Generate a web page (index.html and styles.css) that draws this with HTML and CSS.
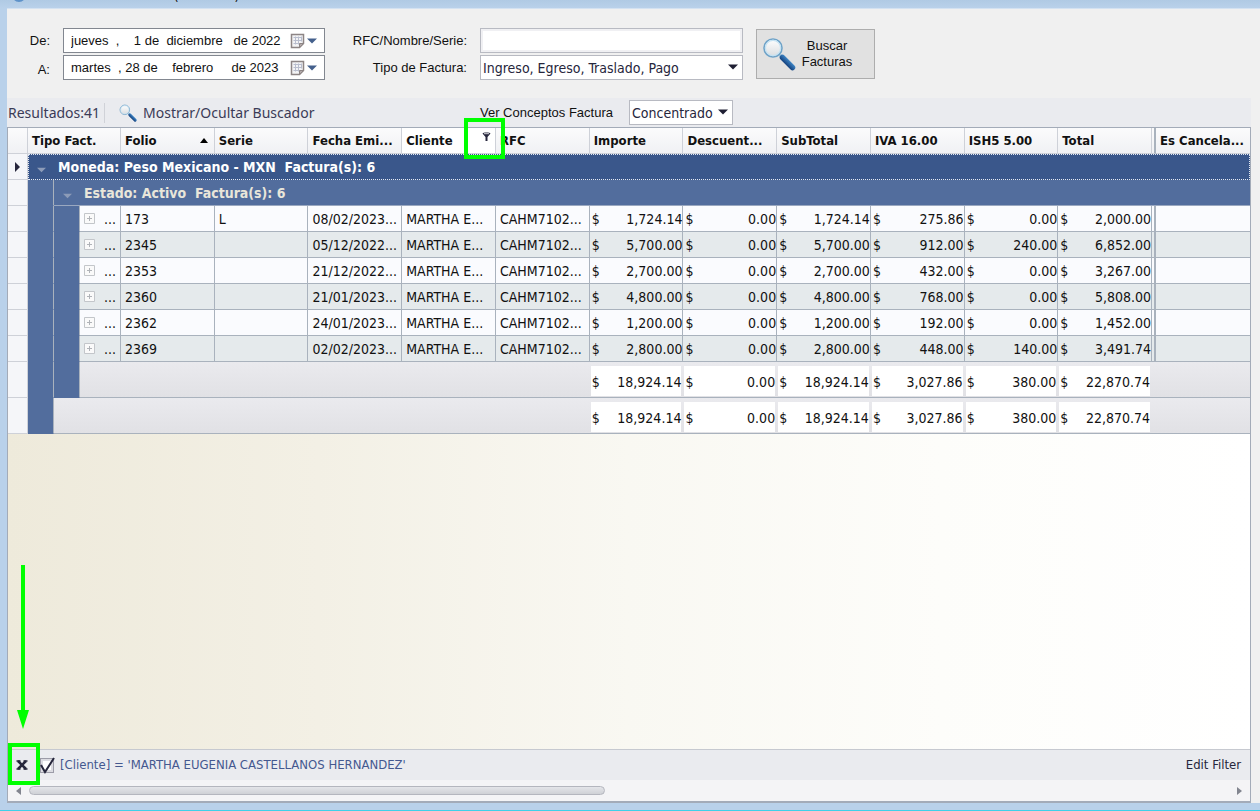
FILE: index.html
```
<!DOCTYPE html>
<html lang="es">
<head>
	<meta charset="UTF-8">
	<meta name="viewport" content="width=device-width, initial-scale=1.0">
	<link rel="stylesheet" href="styles.css">
</head>
<body>

	<!-- iconos compartidos -->
	<svg class="defs" aria-hidden="true">
		<defs>
			<linearGradient id="handle" x1="0" y1="1" x2="1" y2="0">
				<stop offset="0.3" stop-color="#123f7c"/>
				<stop offset="0.7" stop-color="#3f86c6"/>
			</linearGradient>
			<linearGradient id="lens" x1="0" y1="0" x2="0" y2="1">
				<stop offset="0" stop-color="#ffffff"/>
				<stop offset="1" stop-color="#d9dcdf"/>
			</linearGradient>
		</defs>
		<symbol id="lupa" viewBox="0 0 34 34">
			<path d="M18 18l4 4" stroke="#8fb9d6" stroke-width="3"/>
			<path d="M20.500 20.500L30.500 30.500" stroke="url(#handle)" stroke-width="5.500" stroke-linecap="round"/>
			<circle cx="11" cy="11" r="9" fill="url(#lens)" stroke="#6fa3c8" stroke-width="1.600"/>
			<circle cx="11" cy="11" r="7.600" fill="none" stroke="#c4e2f3" stroke-width="1.200"/>
		</symbol>
		<symbol id="calendario" viewBox="0 0 15 16">
			<path d="M1.500 1.500h12v9l-4 4h-8z" fill="#f3f3f5" stroke="#8d8585" stroke-width="1.500"/>
			<path d="M3.500 4.500h8M3.500 7.500h8M3.500 10.500h6M5.500 3.500v8M8.500 3.500v8M11.500 3.500v5" stroke="#b9bece" fill="none"/>
			<path d="M9.500 14.500v-4h4z" fill="#b3aaaa" stroke="#8d8585"/>
		</symbol>
		<symbol id="abajo" viewBox="0 0 10 6"><path d="M0 0.500h10L5 5.500z"/></symbol>
		<symbol id="mas" viewBox="0 0 11 11">
			<path d="M0.500 0.500h10v10h-10z" fill="#fafafa" stroke="#c3c6ca"/>
			<path d="M3 5.500h5M5.500 3v5" stroke="#b0b3b8"/>
		</symbol>
	</svg>

	<header class="titlebar">
		<span class="app-icon"></span>
		<span class="paren">(</span>
		<span class="paren">)</span>
	</header>

	<main class="window">

		<!-- filtros de busqueda -->
		<form class="search">
			<div class="fields">
				<label for="desde">De:</label>
				<div class="date">
					<input type="text" id="desde" value="jueves  ,    1 de  diciembre   de 2022">
					<button type="button" aria-label="Abrir calendario">
						<svg width="15" height="16"><use href="#calendario"/></svg>
						<svg class="arrow" width="10" height="6"><use href="#abajo"/></svg>
					</button>
				</div>
				<label for="hasta" class="low">A:</label>
				<div class="date">
					<input type="text" id="hasta" value="martes  , 28 de    febrero     de 2023">
					<button type="button" aria-label="Abrir calendario">
						<svg width="15" height="16"><use href="#calendario"/></svg>
						<svg class="arrow" width="10" height="6"><use href="#abajo"/></svg>
					</button>
				</div>
			</div>
			<div class="fields wide">
				<label for="rfc">RFC/Nombre/Serie:</label>
				<input type="text" id="rfc" class="box">
				<label for="tipo">Tipo de Factura:</label>
				<div class="combo">
					<select id="tipo"><option>Ingreso, Egreso, Traslado, Pago</option></select>
					<svg width="10" height="6"><use href="#abajo"/></svg>
				</div>
			</div>
			<button type="button" class="buscar">
				<svg width="34" height="34"><use href="#lupa"/></svg>
				<span>Buscar Facturas</span>
			</button>
		</form>

		<section class="content">
			<div class="toolbar">
				<div class="tools">
					<span class="count">Resultados:41</span>
					<button type="button" class="toggle">
						<svg width="18" height="18"><use href="#lupa"/></svg>
						Mostrar/Ocultar Buscador
					</button>
				</div>
				<label for="conceptos">Ver Conceptos Factura</label>
				<div class="combo">
					<select id="conceptos"><option>Concentrado</option></select>
					<svg width="10" height="6"><use href="#abajo"/></svg>
				</div>
			</div>

			<div class="grid">
				<table>
					<colgroup>
						<col class="c-mark"><col class="c-indent"><col class="c-indent"><col class="c-tipo">
						<col span="11"><col class="c-split"><col>
					</colgroup>
					<thead>
						<tr>
							<th></th>
							<th colspan="3">Tipo Fact.</th>
							<th><div class="sorted">Folio <svg width="8" height="5" viewBox="0 0 8 5"><path d="M4 0l4 5H0z"/></svg></div></th>
							<th>Serie</th>
							<th>Fecha Emi...</th>
							<th class="filtered">Cliente
								<svg class="funnel" width="9" height="9" viewBox="0 0 9 9"><path d="M0.500 1.500C0.500 0 8.500 0 8.500 1.500L5.500 5v4h-2V5z"/><path d="M2 1.700h5" stroke="#fff" stroke-width="0.800"/></svg>
								<span class="mark"></span>
							</th>
							<th>RFC</th>
							<th>Importe</th>
							<th>Descuent...</th>
							<th>SubTotal</th>
							<th>IVA 16.00</th>
							<th>ISH5 5.00</th>
							<th>Total</th>
							<th class="split"></th>
							<th>Es Cancela...</th>
						</tr>
					</thead>
					<tbody>
						<tr class="group current">
							<th><svg width="5" height="10" viewBox="0 0 5 10"><path d="M0 0l5 5-5 5z"/></svg></th>
							<td colspan="16"><svg width="9" height="6"><use href="#abajo"/></svg>Moneda: Peso Mexicano - MXN&nbsp; Factura(s): 6</td>
						</tr>
						<tr class="group">
							<th></th>
							<td class="indent"></td>
							<td colspan="15"><svg width="9" height="6"><use href="#abajo"/></svg>Estado: Activo&nbsp; Factura(s): 6</td>
						</tr>
					</tbody>
					<tbody id="facturas"></tbody>
					<tbody id="totales"></tbody>
				</table>

				<div class="empty">
					<svg class="pointer" width="12" height="164" viewBox="0 0 12 164"><path d="M4 0h4v145h4l-6 19-6-19h4z" fill="#0f0"/></svg>
				</div>

				<div class="filterbar">
					<button type="button" class="close" aria-label="Quitar filtro">
						<svg width="12" height="10" viewBox="0 0 12 10"><path d="M2 1l8 8M10 1L2 9" stroke="#26263c" stroke-width="2.500"/><path d="M0.500 1h4M7.500 1h4M0.500 9h4M7.500 9h4" stroke="#26263c" stroke-width="1.500"/></svg>
						<span class="mark"></span>
					</button>
					<label class="check">
						<input type="checkbox" checked aria-label="Filtro activo">
						<svg width="15" height="17" viewBox="0 0 15 17"><path d="M1 8l4 7L14 1" fill="none" stroke="#26263c" stroke-width="2"/></svg>
					</label>
					<a href="#" class="expr">[Cliente] = 'MARTHA EUGENIA CASTELLANOS HERNANDEZ'</a>
					<button type="button" class="edit">Edit Filter</button>
				</div>

				<div class="scrollbar">
					<svg width="5" height="8" viewBox="0 0 5 8"><path d="M5 0v8L0 4z"/></svg>
					<div class="track"><div class="thumb"></div></div>
					<svg width="5" height="8" viewBox="0 0 5 8"><path d="M0 0v8l5-4z"/></svg>
				</div>
			</div>
		</section>
	</main>

	<script>
	const facturas = [
		['173', 'L', '08/02/2023...', '1,724.14', '0.00', '1,724.14', '275.86', '0.00', '2,000.00'],
		['2345', '', '05/12/2022...', '5,700.00', '0.00', '5,700.00', '912.00', '240.00', '6,852.00'],
		['2353', '', '21/12/2022...', '2,700.00', '0.00', '2,700.00', '432.00', '0.00', '3,267.00'],
		['2360', '', '21/01/2023...', '4,800.00', '0.00', '4,800.00', '768.00', '0.00', '5,808.00'],
		['2362', '', '24/01/2023...', '1,200.00', '0.00', '1,200.00', '192.00', '0.00', '1,452.00'],
		['2369', '', '02/02/2023...', '2,800.00', '0.00', '2,800.00', '448.00', '140.00', '3,491.74']
	];
	const totales = ['18,924.14', '0.00', '18,924.14', '3,027.86', '380.00', '22,870.74'];

	const celda = (v) => `<td>${v}</td>`;
	const importe = (v) => `<td class="money"><div><span>$</span><span>${v}</span></div></td>`;

	document.getElementById('facturas').innerHTML = facturas.map((f) => `
		<tr class="row">
			<th></th><td class="indent"></td><td class="indent"></td>
			<td><div class="expand"><svg width="11" height="11"><use href="#mas"/></svg>...</div></td>
			${f.slice(0, 3).map(celda).join('')}
			<td>MARTHA E...</td><td>CAHM7102...</td>
			${f.slice(3).map(importe).join('')}
			<td class="split"></td><td></td>
		</tr>`).join('');

	// un pie por cada nivel de agrupacion
	document.getElementById('totales').innerHTML = [2, 1].map((nivel) => `
		<tr class="total">
			<th></th>${'<td class="indent"></td>'.repeat(nivel)}
			<td colspan="${8 - nivel}"></td>
			${totales.map(importe).join('')}
			<td colspan="2"></td>
		</tr>`).join('');
	</script>

</body>
</html>
```

FILE: styles.css
```
* {box-sizing: border-box; }
body {margin: 0; min-height: 100vh; display: flex; flex-direction: column; background: #b9d1ea; border-bottom: 1px solid #3fd0e8; font: 13px/16px "DejaVu Sans Condensed", "DejaVu Sans", sans-serif; color: #111; }
button, input, select {font: inherit; color: inherit; margin: 0; padding: 0; border: 0; background: none; border-radius: 0; }
.defs {position: absolute; width: 0; height: 0; }

/* barra de titulo */
.titlebar {height: 8px; display: flex; align-items: flex-end; padding-left: 12px; overflow: hidden; background: linear-gradient(#b0cae4, #b9d1ea); }
.titlebar .app-icon {width: 14px; height: 14px; margin-bottom: 6px; border-radius: 50%; background: #2360a5; border: 2px solid #5e92c9; }
.titlebar .paren {margin-left: 148px; margin-bottom: 3px; }
.titlebar .paren + .paren {margin-left: 56px; }

.window {flex: 1; display: flex; flex-direction: column; margin: 0 0 7px 7px; background: #f0f0f0; border-top: 1px solid #d4e2f1; }

/* formulario */
.search {display: flex; align-items: flex-start; padding: 19px 0 18px 21px; font: 13px/16px "Liberation Sans", Arial, sans-serif; }
.fields {display: grid; grid-template-columns: 22px 262px; grid-auto-rows: 25px; gap: 2px 13px; align-items: center; text-align: right; }
.fields .low {padding-top: 4px; }
.fields.wide {margin: 0 13px 0 24px; grid-template-columns: 118px 263px; }
.date {display: flex; align-items: center; height: 25px; padding: 0 7px; background: #fff; border: 1px solid #828790; }
.date input {flex: 1; min-width: 0; outline: 0; }
.date button {display: flex; align-items: center; gap: 2px; }
.date .arrow {fill: #44608c; }
.box {height: 25px; background: #fff; border: 1px solid #b8bac2; box-shadow: inset 0 0 0 2px #f0f0f3; }
.combo {position: relative; height: 25px; }
.combo select {width: 100%; height: 100%; padding-left: 2px; background: #fff; border: 1px solid #b8bac2; appearance: none; font: 14px "DejaVu Sans Condensed", sans-serif; color: #26263c; }
.combo svg {position: absolute; right: 5px; top: 9px; fill: #1f1f33; pointer-events: none; }
.buscar {display: flex; align-items: center; gap: 4px; width: 119px; height: 50px; margin-top: 1px; padding: 0 20px 0 5px; background: #e1e1e1; border: 1px solid #adadad; text-align: center; }
.buscar svg {flex: none; }

.content {flex: 1; display: flex; flex-direction: column; margin-right: 9px; }

/* barra de herramientas */
.toolbar {display: flex; align-items: center; height: 29px; padding-left: 1px; background: #eaebef; font: 13px/16px "Liberation Sans", Arial, sans-serif; }
.toolbar > label {width: 136px; }
.tools {display: flex; align-items: center; width: 472px; font: 14px/20px "Noto Sans", sans-serif; color: #3b3b57; }
.count {padding-right: 4px; border-right: 1px solid #d0d2d8; }
.toggle {display: flex; align-items: center; gap: 6px; margin-left: 14px; }
.toolbar .combo {width: 104px; margin-left: 13px; }

/* tabla */
.grid {flex: 1; display: flex; flex-direction: column; border: 1px solid #a3abb8; border-width: 1px 1px 2px; }
table {width: 100%; table-layout: fixed; border-collapse: separate; border-spacing: 0; }
.c-mark {width: 20px; }
.c-indent {width: 26px; }
.c-tipo {width: 41px; }
.c-split {width: 4px; }
th, td {height: 26px; padding: 0 4px; border-right: 1px solid #a9b2bd; border-bottom: 1px solid #a9b2bd; text-align: left; white-space: nowrap; }
th {background: linear-gradient(#fbfbfc, #f0f1f4); border-color: #ced1d8; }
tbody th {padding: 0 0 0 7px; background: #f5f6f9; }
tbody th svg {display: block; fill: #26263c; }
th:last-child, td:last-child {border-right: 0; }
.sorted {display: flex; justify-content: space-between; align-items: center; padding-right: 2px; }
.filtered {position: relative; background: #fff; }
.filtered .funnel {position: absolute; right: 4px; top: 4px; fill: #26263c; }
.split {padding: 0; border-right: 2px solid #a9b2bd; }

tbody {font-size: 14px; }
.group td {padding-left: 9px; background: #526d9d; color: #e9e6da; font-weight: bold; border-bottom-color: #9aa8c0; }
.group td svg {margin-right: 12px; fill: #8c9bb8; vertical-align: -1px; }
.group.current td {padding-left: 8px; background: #3a578b; color: #fff; border: 1px dotted #e4e9f2; }
.row td {background: #fafbfe; }
.row:nth-child(even) td {background: #e5eaec; }
tbody tr td.indent, .row:nth-child(even) td.indent {padding: 0; background: #526d9d; border-bottom-color: #526d9d; border-right-color: #a9b2bd; }
.expand {display: flex; align-items: center; justify-content: space-between; }
td.money {padding: 0 0 0 2px; }
.money div {display: flex; justify-content: space-between; }

.total th, .total td {height: 36px; }
.total td {background: linear-gradient(#eaeaee, #e1e1e5); border-right: 0; }
.total td.indent {border-right: 1px solid #a9b2bd; }
.total td.money {padding: 2px 2px 0 1px; }
.total .money div {padding: 8px 0 6px 1px; background: #fff; }

.empty {flex: 1; position: relative; min-height: 180px; background: linear-gradient(90deg, #eeeadb, #f3f0e5 25%, #f9f8f2 50%, #fdfdfa 75%, #fff); }
.pointer {position: absolute; left: 9px; bottom: 20px; }

/* barra del filtro */
.filterbar {display: flex; align-items: center; height: 31px; padding: 0 9px 0 8px; background: #eaebef; border-top: 1px solid #c6c9d0; }
.close {position: relative; display: flex; margin-right: 12px; }
.check {position: relative; display: flex; margin-right: 6px; }
.check input {appearance: none; width: 14px; height: 15px; background: #fff; border: 1px solid #9c9ca8; box-shadow: inset 0 0 0 2px #dcdce2; }
.check svg {position: absolute; left: 0; top: -1px; pointer-events: none; }
.expr {color: #44588f; text-decoration: none; }
.edit {margin-left: auto; color: #26263c; }

.scrollbar {display: flex; align-items: center; gap: 8px; height: 21px; padding: 0 8px; background: #f4f4f6; }
.scrollbar svg {fill: #82858f; }
.track {flex: 1; }
.thumb {width: 48%; height: 9px; border: 1px solid #b4b6be; border-radius: 5px; background: linear-gradient(#e4e5e9, #cfd1d6); }

/* recuadros verdes */
.mark {position: absolute; border: 4px solid #0f0; pointer-events: none; }
.filtered .mark {width: 41px; height: 41px; right: -10px; top: -10px; z-index: 1; }
.close .mark {width: 32px; height: 42px; left: -8px; top: -17px; }
```
